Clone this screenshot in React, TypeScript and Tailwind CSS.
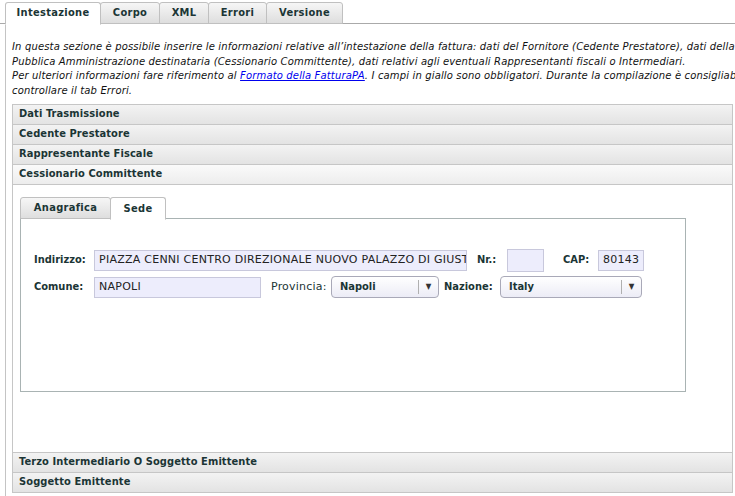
import React from "react";

const tabs = [
  { t: "Intestazione", w: "w-[96px]" },
  { t: "Corpo", w: "w-[60px]" },
  { t: "XML", w: "w-[50px]" },
  { t: "Errori", w: "w-[59px]" },
  { t: "Versione", w: "w-[77px]" },
];

const bold = { fontFamily: "'DejaVu Sans Condensed', 'DejaVu Sans', sans-serif" };

function AccHeader({ label, open }: { label: string; open?: boolean }) {
  return (
    <div
      className={`h-[21px] flex items-center pl-[6px] border border-[#c6c6c6] -mt-px first:mt-0 text-[11px] font-bold text-[#1b3535] tracking-[0.1px] ${
        open ? "bg-gradient-to-b from-[#fafafa] to-[#ededed]" : "bg-gradient-to-b from-[#f3f3f3] to-[#e3e3e3]"
      }`}
      style={bold}
    >
      {label}
    </div>
  );
}

function Input({ value, w }: { value?: string; w: string }) {
  return (
    <div
      className={`${w} h-[21px] border border-[#c8c8dc] bg-[#ededfc] flex items-center px-[4px] text-[11px] tracking-[0.25px] text-[#222] whitespace-nowrap overflow-hidden`}
    >
      {value}
    </div>
  );
}

function Select({ value, w }: { value: string; w: string }) {
  return (
    <div
      className={`${w} h-[22px] border border-[#a9a9b8] rounded-[4px] bg-gradient-to-b from-[#ffffff] to-[#ececf6] flex items-center text-[11px] font-bold text-[#1b3535]`}
      style={bold}
    >
      <span className="flex-1 pl-[8px]">{value}</span>
      <span className="h-[14px] border-l border-[#b0b0b0] w-[20px] flex items-center justify-center text-[8px] text-[#333]">
        ▼
      </span>
    </div>
  );
}

export default function App() {
  return (
    <div
      className="w-[735px] h-[496px] overflow-hidden bg-white text-[#1b3535]"
      style={{ fontFamily: "'DejaVu Sans', Verdana, sans-serif" }}
    >
      {/* tab bar */}
      <div className="flex pl-[5px] pt-[2px] border-b border-[#aaaaaa] h-[24px]">
        {tabs.map((t, i) => (
          <div
            key={t.t}
            className={`${t.w} h-[22px] flex items-center justify-center border border-[#c0c0c0] rounded-t-[3px] text-[11px] font-bold tracking-[0.3px] ${
              i === 0
                ? "bg-white border-b-white h-[23px] -mb-px"
                : "bg-gradient-to-b from-[#f6f6f6] to-[#dedede] -ml-px"
            }`}
            style={bold}
          >
            {t.t}
          </div>
        ))}
      </div>

      <div className="ml-[5px] border-l border-[#c4c4c4] h-[472px] pl-[6px]">
        <p className="pt-[16px] text-[10px] italic leading-[14.5px] tracking-[0.15px] text-[#111] whitespace-nowrap">
          In questa sezione è possibile inserire le informazioni relative all’intestazione della fattura: dati del Fornitore (Cedente Prestatore), dati della
          <br />
          Pubblica Amministrazione destinataria (Cessionario Committente), dati relativi agli eventuali Rappresentanti fiscali o Intermediari.
          <br />
          Per ulteriori informazioni fare riferimento al{" "}
          <a className="text-[#0000ee] underline" href="#">
            Formato della FatturaPA
          </a>
          . I campi in giallo sono obbligatori. Durante la compilazione è consigliabile
          <br />
          controllare il tab Errori.
        </p>

        <div className="mt-[6px] w-[721px]">
          <AccHeader label="Dati Trasmissione" />
          <AccHeader label="Cedente Prestatore" />
          <AccHeader label="Rappresentante Fiscale" />
          <AccHeader label="Cessionario Committente" open />
          <div className="border border-t-0 border-[#c6c6c6] h-[268px] pt-[12px] pl-[7px]">
            {/* inner tabs */}
            <div className="flex border-b border-[#a9b3b3] w-[666px] h-[22px]">
              <div
                className="w-[91px] h-[22px] flex items-center justify-center border border-[#c0c0c0] rounded-t-[3px] bg-gradient-to-b from-[#f6f6f6] to-[#dedede] text-[11px] font-bold tracking-[0.3px]"
                style={bold}
              >
                Anagrafica
              </div>
              <div
                className="w-[56px] h-[23px] flex items-center justify-center pt-[1px] border border-[#c0c0c0] border-b-white -ml-px bg-white rounded-t-[3px] text-[11px] font-bold tracking-[0.3px] -mb-px"
                style={bold}
              >
                Sede
              </div>
            </div>
            <div className="w-[666px] h-[173px] border border-t-0 border-[#a9b3b3] pt-[30px] pl-[13px]">
              <div className="flex items-center">
                <span className="w-[60px] text-[11px] font-bold" style={bold}>
                  Indirizzo:
                </span>
                <Input w="w-[373px]" value="PIAZZA CENNI CENTRO DIREZIONALE NUOVO PALAZZO DI GIUSTIZIA" />
                <span className="ml-[10px] w-[30px] text-[11px] font-bold" style={bold}>
                  Nr.:
                </span>
                <Input w="w-[37px] h-[23px]" />
                <span className="ml-[19px] w-[35px] text-[11px] font-bold" style={bold}>
                  CAP:
                </span>
                <Input w="w-[46px]" value="80143" />
              </div>
              <div className="flex items-center mt-[4px]">
                <span className="w-[60px] text-[11px] font-bold" style={bold}>
                  Comune:
                </span>
                <Input w="w-[167px]" value="NAPOLI" />
                <span className="ml-[10px] w-[60px] text-[11px] tracking-[0.2px]">Provincia:</span>
                <Select w="w-[108px]" value="Napoli" />
                <span className="ml-[5px] w-[56px] text-[11px] font-bold" style={bold}>
                  Nazione:
                </span>
                <Select w="w-[142px]" value="Italy" />
              </div>
            </div>
          </div>
          <AccHeader label="Terzo Intermediario O Soggetto Emittente" />
          <AccHeader label="Soggetto Emittente" />
        </div>
      </div>
    </div>
  );
}
